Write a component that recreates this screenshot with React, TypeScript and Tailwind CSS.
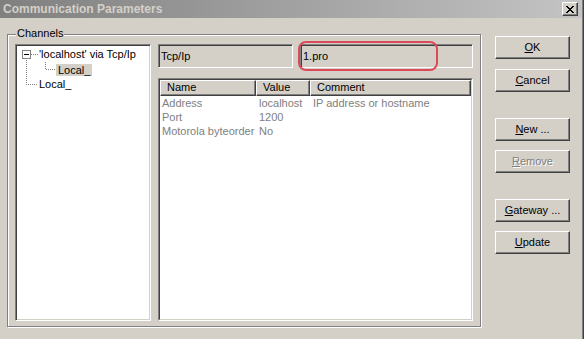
import React from 'react';

const sunken =
  'border border-t-[#808080] border-l-[#808080] border-r-white border-b-white shadow-[inset_1px_1px_0_#404040,inset_-1px_-1px_0_#d4d0c8]';
const raised =
  'border border-t-white border-l-white border-r-[#404040] border-b-[#404040] shadow-[inset_-1px_-1px_0_#808080]';

type BtnProps = { u: string; rest: string; disabled?: boolean; className?: string };

function Btn({ u, rest, disabled, className }: BtnProps) {
  return (
    <div
      className={`${raised} ${className ?? ''} w-[75px] h-[23px] flex items-center justify-center bg-[#d4d0c8] ${
        disabled ? 'text-[#808080] [text-shadow:1px_1px_0_#fff]' : 'text-black'
      }`}
    >
      <span>
        <span className="underline underline-offset-[1px]">{u}</span>
        {rest}
      </span>
    </div>
  );
}

const rows = [
  { name: 'Address', value: 'localhost', comment: 'IP address or hostname' },
  { name: 'Port', value: '1200', comment: '' },
  { name: 'Motorola byteorder', value: 'No', comment: '' },
];

function Tree() {
  return (
    <div className={`${sunken} w-[136px] h-[277px] bg-white pt-[2px] pl-[1px]`}>
      {/* root node */}
      <div className="h-[15px] flex items-center">
        <svg width="22" height="15" shapeRendering="crispEdges">
          <rect x="5.5" y="3.5" width="8" height="8" fill="white" stroke="#808080" />
          <line x1="7" y1="7.5" x2="12" y2="7.5" stroke="#000" />
          <line x1="14" y1="7.5" x2="21" y2="7.5" stroke="#808080" strokeDasharray="1 1" />
          <line x1="9.5" y1="13" x2="9.5" y2="15" stroke="#808080" strokeDasharray="1 1" />
        </svg>
        <span className="whitespace-nowrap">'localhost' via Tcp/Ip</span>
      </div>
      {/* child */}
      <div className="h-[15px] flex items-center">
        <svg width="39" height="15" shapeRendering="crispEdges">
          <line x1="9.5" y1="0" x2="9.5" y2="15" stroke="#808080" strokeDasharray="1 1" />
          <line x1="28.5" y1="0" x2="28.5" y2="8" stroke="#808080" strokeDasharray="1 1" />
          <line x1="29" y1="7.5" x2="38" y2="7.5" stroke="#808080" strokeDasharray="1 1" />
        </svg>
        <span className="bg-[#d4d0c8] px-[2px] leading-[12px] h-[12px]">Local_</span>
      </div>
      {/* sibling */}
      <div className="h-[15px] flex items-center">
        <svg width="22" height="15" shapeRendering="crispEdges">
          <line x1="9.5" y1="1" x2="9.5" y2="8" stroke="#808080" strokeDasharray="1 1" />
          <line x1="11" y1="7.5" x2="21" y2="7.5" stroke="#808080" strokeDasharray="1 1" />
        </svg>
        <span>Local_</span>
      </div>
    </div>
  );
}

function PropList() {
  return (
    <div className="w-[315px] h-[243px] border border-t-[#808080] border-l-[#808080] border-r-white border-b-white">
      <div className="h-full border border-t-[#404040] border-l-[#404040] border-r-[#d4d0c8] border-b-[#d4d0c8] bg-white">
        <div className="flex h-[16px] bg-[#d4d0c8] text-black">
          <div className={`${raised} w-[96px] pl-[6px] leading-[13px]`}>Name</div>
          <div className={`${raised} w-[54px] pl-[6px] leading-[13px]`}>Value</div>
          <div className={`${raised} flex-1 pl-[6px] leading-[13px]`}>Comment</div>
        </div>
        {rows.map((r) => (
          <div key={r.name} className="flex h-[14px] leading-[14px] text-[#808080]">
            <div className="w-[96px] pl-[2px] whitespace-nowrap">{r.name}</div>
            <div className="w-[54px] pl-[3px]">{r.value}</div>
            <div className="flex-1 pl-[3px] whitespace-nowrap">{r.comment}</div>
          </div>
        ))}
      </div>
    </div>
  );
}

export default function App() {
  return (
    <div className="w-[584px] h-[339px] bg-[#d4d0c8] overflow-hidden border-r border-r-[#404040] shadow-[inset_-1px_0_0_#808080] font-['Liberation_Sans',Arial,sans-serif] text-[11px] text-black">
      {/* title bar */}
      <div className="h-[18px] w-[582px] bg-linear-to-r from-[#808080] to-[#c4c4c4] flex items-center pl-[3px] pr-[4px]">
        <span className="flex-1 font-bold text-[12px] text-[#d4d0c8] whitespace-nowrap">Communication Parameters</span>
        <div className={`${raised} w-[16px] h-[14px] bg-[#d4d0c8] flex items-center justify-center`}>
          <svg width="8" height="7" viewBox="0 0 8 7" shapeRendering="crispEdges">
            <path d="M0 0h2v1h-2zM6 0h2v1h-2zM1 1h2v1h-2zM5 1h2v1h-2zM2 2h4v1h-4zM3 3h2v1h-2zM2 4h4v1h-4zM1 5h2v1h-2zM5 5h2v1h-2zM0 6h2v1h-2zM6 6h2v1h-2z" fill="#000" />
          </svg>
        </div>
      </div>

      <div className="flex items-start">
        {/* Channels group */}
        <div className="relative ml-[7px] mt-[16px] w-[474px] h-[293px] border border-[#808080] shadow-[inset_1px_1px_0_#fff,1px_1px_0_#fff] pt-[9px] pl-[7px] flex gap-[7px]">
          <span className="absolute left-[8px] top-[-8px] px-[1px] bg-[#d4d0c8] leading-[13px]">Channels</span>
          <Tree />
          <div className="relative flex flex-col gap-[10px]">
            <div className="flex gap-[7px]">
              <div className={`${sunken} w-[135px] h-[24px] pl-[2px] flex items-center`}>Tcp/Ip</div>
              <div className={`${sunken} w-[173px] h-[24px] pl-[2px] flex items-center`}>1.pro</div>
            </div>
            <PropList />
            {/* red highlight annotation */}
            <div className="absolute left-[140px] top-[-3px] w-[140px] h-[30px] rounded-[8px] border-2 border-[#dc4a5a]" />
          </div>
        </div>

        {/* button column */}
        <div className="ml-[14px] mt-[18px] flex flex-col">
          <Btn u="O" rest="K" />
          <Btn u="C" rest="ancel" className="mt-[10px]" />
          <Btn u="N" rest="ew ..." className="mt-[26px]" />
          <Btn u="R" rest="emove" disabled className="mt-[9px]" />
          <Btn u="G" rest="ateway ..." className="mt-[26px]" />
          <Btn u="U" rest="pdate" className="mt-[9px]" />
        </div>
      </div>
    </div>
  );
}
